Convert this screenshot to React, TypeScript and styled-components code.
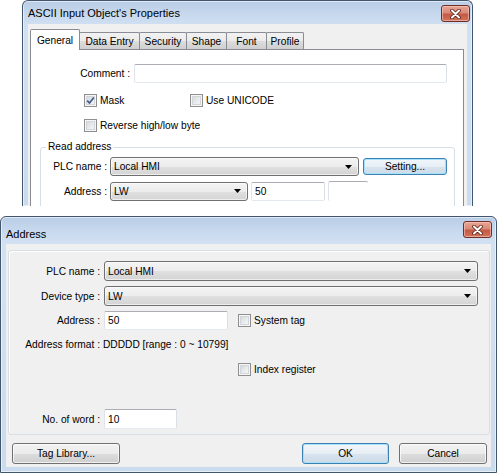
import styled, { createGlobalStyle } from "styled-components";

const GlobalStyle = createGlobalStyle`
	body {
		margin: 0;
		background: #fff;
		font-family: "Liberation Sans", Arial, sans-serif;
		font-size: 10.2px;
		color: #000;
	}
`;

const Page = styled.div`
	width: 497px;
	height: 473px;
	display: flex;
	flex-direction: column;
	gap: 10px;
	overflow: hidden;
`;

const Window = styled.div<{ $width: number; $height: number; $offset?: number; $cropped?: boolean }>`
	box-sizing: border-box;
	flex-shrink: 0;
	width: ${(p) => p.$width}px;
	height: ${(p) => p.$height}px;
	margin-left: ${(p) => p.$offset ?? 0}px;
	display: flex;
	flex-direction: column;
	border: 1px solid #42566e;
	border-bottom-width: ${(p) => (p.$cropped ? 0 : 1)}px;
	border-radius: 6px 6px 0 0;
	background: linear-gradient(180deg, #b9cde7 0px, #c8d9ee 14px, #d2e1f2 26px, #cbdbee 100%);
	box-shadow: inset 0 0 0 1px rgba(255, 255, 255, 0.55);
	padding: 0 5px ${(p) => (p.$cropped ? 0 : 5)}px;
	overflow: hidden;
`;

const TitleBar = styled.div<{ $height: number }>`
	flex-shrink: 0;
	height: ${(p) => p.$height}px;
	margin-right: -3px;
	display: flex;
	align-items: flex-start;
	justify-content: space-between;
`;

const TitleText = styled.span<{ $top: number }>`
	padding-top: ${(p) => p.$top}px;
	font-size: 11px;
	color: #000;
	white-space: nowrap;
`;

const CloseButton = styled.div<{ $top: number; $width: number }>`
	box-sizing: border-box;
	margin-top: ${(p) => p.$top}px;
	width: ${(p) => p.$width}px;
	height: 17px;
	border: 1px solid #6e3026;
	border-radius: 3px;
	background: linear-gradient(180deg, #e8a594 0%, #d98a78 45%, #c45a45 55%, #d0735c 100%);
	box-shadow: inset 0 0 0 1px rgba(255, 210, 200, 0.55);
	display: flex;
	align-items: center;
	justify-content: center;
`;

const Client = styled.div<{ $pad: string }>`
	flex: 1;
	min-height: 0;
	display: flex;
	flex-direction: column;
	background: #f0f0f0;
	padding: ${(p) => p.$pad};
`;

const TabRow = styled.div`
	position: relative;
	z-index: 1;
	display: flex;
	align-items: flex-end;
	height: 21px;
	margin-bottom: -1px;
`;

const Tab = styled.div<{ $width: number; $active?: boolean }>`
	box-sizing: border-box;
	width: ${(p) => p.$width}px;
	height: ${(p) => (p.$active ? 21 : 17)}px;
	margin-bottom: ${(p) => (p.$active ? 0 : 1)}px;
	& + & {
		margin-left: -1px;
	}
	border: 1px solid #898c95;
	border-bottom: none;
	border-radius: 2px 2px 0 0;
	background: ${(p) =>
		p.$active ? "#fff" : "linear-gradient(180deg, #f2f2f2 0%, #ebebeb 50%, #dddddd 51%, #cfcfcf 100%)"};
	display: flex;
	align-items: center;
	justify-content: center;
	white-space: nowrap;
	padding-top: ${(p) => (p.$active ? 0 : 1)}px;
`;

const TabPanel = styled.div`
	flex: 1;
	display: flex;
	flex-direction: column;
	background: #fff;
	border: 1px solid #898c95;
	border-bottom: none;
`;

const Row = styled.div<{ $top: number; $gap?: number; $indent?: number }>`
	display: flex;
	align-items: center;
	margin-top: ${(p) => p.$top}px;
	gap: ${(p) => p.$gap ?? 0}px;
	padding-left: ${(p) => p.$indent ?? 0}px;
`;

const FieldLabel = styled.span<{ $width: number }>`
	width: ${(p) => p.$width}px;
	flex-shrink: 0;
	text-align: right;
	white-space: nowrap;
`;

const TextBox = styled.div<{ $width: number; $height: number; $open?: boolean }>`
	box-sizing: border-box;
	width: ${(p) => p.$width}px;
	height: ${(p) => p.$height}px;
	flex-shrink: 0;
	background: #fff;
	border: 1px solid;
	border-color: #abadb3 #dbdfe6 #e3e9ef #e2e3ea;
	border-right-width: ${(p) => (p.$open ? 0 : 1)}px;
	border-bottom-width: ${(p) => (p.$open ? 0 : 1)}px;
	border-radius: 2px;
	display: flex;
	align-items: center;
	padding-left: 3px;
`;

const Combo = styled.div<{ $width: number; $height: number }>`
	box-sizing: border-box;
	width: ${(p) => p.$width}px;
	height: ${(p) => p.$height}px;
	flex-shrink: 0;
	border: 1px solid #707070;
	border-radius: 3px;
	background: linear-gradient(180deg, #f4f4f4 0%, #ececec 50%, #e0e0e0 51%, #d4d4d4 100%);
	box-shadow: inset 0 0 0 1px rgba(255, 255, 255, 0.6);
	display: flex;
	align-items: center;
	justify-content: space-between;
	padding: 0 6px 0 3px;
`;

const Button = styled.div<{ $width: number; $height: number; $focused?: boolean; $shift?: number }>`
	box-sizing: border-box;
	width: ${(p) => p.$width}px;
	height: ${(p) => p.$height}px;
	margin-left: ${(p) => p.$shift ?? 0}px;
	flex-shrink: 0;
	border: 1px solid ${(p) => (p.$focused ? "#3c7fb1" : "#707070")};
	border-radius: 3px;
	background: ${(p) =>
		p.$focused
			? "linear-gradient(180deg, #f1f6fa 0%, #e6eef5 50%, #d8e4ee 51%, #cddbe8 100%)"
			: "linear-gradient(180deg, #f2f2f2 0%, #ebebeb 50%, #dddddd 51%, #cfcfcf 100%)"};
	box-shadow: inset 0 0 0 1px ${(p) => (p.$focused ? "#a6e2fb" : "rgba(255,255,255,0.7)")};
	display: flex;
	align-items: center;
	justify-content: center;
	white-space: nowrap;
`;

const CheckItem = styled.label<{ $width?: number; $shift?: number }>`
	display: flex;
	align-items: center;
	gap: 3px;
	width: ${(p) => (p.$width ? `${p.$width}px` : "auto")};
	margin-left: ${(p) => p.$shift ?? 0}px;
	white-space: nowrap;
`;

const CheckSquare = styled.span`
	box-sizing: border-box;
	width: 13px;
	height: 13px;
	flex-shrink: 0;
	border: 1px solid #8e8f8f;
	background: linear-gradient(135deg, #cdd1d6 0%, #e9ebed 55%, #fbfbfb 100%);
	box-shadow: inset 0 0 0 1px #f6f6f6, inset 0 0 0 2px #d2d5d9;
	display: flex;
	align-items: center;
	justify-content: center;
`;

const GroupBox = styled.fieldset<{ $indent: number; $width: number }>`
	box-sizing: border-box;
	width: ${(p) => p.$width}px;
	margin: 9px 0 0 ${(p) => p.$indent}px;
	padding: 0 0 10px;
	min-width: 0;
	border: 1px solid #d5dfe5;
	border-radius: 3px;
	box-shadow: inset 1px 1px 0 #fff;
`;

const Legend = styled.legend`
	margin-left: 5px;
	padding: 0 2px;
	line-height: 12px;
	color: #000;
`;

const Frame = styled.div`
	box-sizing: border-box;
	height: 185px;
	flex-shrink: 0;
	border: 1px solid #d5dfe5;
	border-radius: 3px;
	box-shadow: inset 1px 1px 0 #fff;
	display: flex;
	flex-direction: column;
`;

const ButtonBar = styled.div`
	display: flex;
	align-items: center;
	justify-content: space-between;
	margin-top: 8px;
	padding: 0 3px 0 4px;
`;

const ButtonGroup = styled.div`
	display: flex;
	gap: 10px;
`;

function CloseGlyph() {
	return (
		<svg width="11" height="10" viewBox="0 0 11 10">
			<path d="M2 1.5 L9 8.5 M9 1.5 L2 8.5" stroke="#5b1f17" strokeWidth="3.6" strokeLinecap="round" />
			<path d="M2 1.5 L9 8.5 M9 1.5 L2 8.5" stroke="#fff" strokeWidth="2" strokeLinecap="round" />
		</svg>
	);
}

function Arrow() {
	return (
		<svg width="7" height="4" viewBox="0 0 7 4">
			<polygon points="0,0 7,0 3.5,4" fill="#000" />
		</svg>
	);
}

function Check({ label, checked, width, shift }: { label: string; checked?: boolean; width?: number; shift?: number }) {
	return (
		<CheckItem $width={width} $shift={shift}>
			<CheckSquare>
				{checked && (
					<svg width="9" height="9" viewBox="0 0 9 9">
						<path d="M1.2 4.6 L3.5 7 L7.8 1.4" stroke="#3f5a8f" strokeWidth="1.7" fill="none" />
					</svg>
				)}
			</CheckSquare>
			{label}
		</CheckItem>
	);
}

function Dropdown({ value, width, height }: { value: string; width: number; height: number }) {
	return (
		<Combo $width={width} $height={height}>
			<span>{value}</span>
			<Arrow />
		</Combo>
	);
}

const tabs = [
	{ name: "General", width: 50 },
	{ name: "Data Entry", width: 61 },
	{ name: "Security", width: 48 },
	{ name: "Shape", width: 41 },
	{ name: "Font", width: 41 },
	{ name: "Profile", width: 38 },
];

function PropertiesWindow() {
	return (
		<Window $width={451} $height={206} $offset={22} $cropped>
			<TitleBar $height={23}>
				<TitleText $top={6}>ASCII Input Object's Properties</TitleText>
				<CloseButton $top={4} $width={29}>
					<CloseGlyph />
				</CloseButton>
			</TitleBar>
			<Client $pad="5px 3px 0 2px">
				<TabRow>
					{tabs.map((t, i) => (
						<Tab key={t.name} $width={t.width} $active={i === 0}>
							{t.name}
						</Tab>
					))}
				</TabRow>
				<TabPanel>
					<Row $top={14} $gap={4}>
						<FieldLabel $width={99}>Comment :</FieldLabel>
						<TextBox $width={313} $height={19} />
					</Row>
					<Row $top={11} $indent={53}>
						<Check label="Mask" checked width={106} />
						<Check label="Use UNICODE" />
					</Row>
					<Row $top={12} $indent={53}>
						<Check label="Reverse high/low byte" />
					</Row>
					<GroupBox $indent={9} $width={415}>
						<Legend>Read address</Legend>
						<Row $top={4} $gap={3}>
							<FieldLabel $width={66}>PLC name :</FieldLabel>
							<Dropdown value="Local HMI" width={249} height={19} />
							<Button $width={84} $height={17} $focused $shift={1}>
								Setting...
							</Button>
						</Row>
						<Row $top={5} $gap={3}>
							<FieldLabel $width={66}>Address :</FieldLabel>
							<Dropdown value="LW" width={138} height={19} />
							<TextBox $width={74} $height={19}>
								50
							</TextBox>
							<TextBox $width={40} $height={20} $open />
						</Row>
					</GroupBox>
				</TabPanel>
			</Client>
		</Window>
	);
}

function AddressWindow() {
	return (
		<Window $width={497} $height={257}>
			<TitleBar $height={27}>
				<TitleText $top={11}>Address</TitleText>
				<CloseButton $top={4} $width={29} style={{ marginRight: 2 }}>
					<CloseGlyph />
				</CloseButton>
			</TitleBar>
			<Client $pad="6px 1px 0 2px">
				<Frame>
					<Row $top={10} $gap={4}>
						<FieldLabel $width={91}>PLC name :</FieldLabel>
						<Dropdown value="Local HMI" width={374} height={20} />
					</Row>
					<Row $top={5} $gap={4}>
						<FieldLabel $width={91}>Device type :</FieldLabel>
						<Dropdown value="LW" width={374} height={20} />
					</Row>
					<Row $top={5} $gap={4}>
						<FieldLabel $width={91}>Address :</FieldLabel>
						<TextBox $width={124} $height={19}>
							50
						</TextBox>
						<Check label="System tag" shift={6} />
					</Row>
					<Row $top={9} $gap={3}>
						<FieldLabel $width={91}>Address format :</FieldLabel>
						<span>DDDDD [range : 0 ~ 10799]</span>
					</Row>
					<Row $top={13} $indent={229}>
						<Check label="Index register" />
					</Row>
					<Row $top={33} $gap={4}>
						<FieldLabel $width={91}>No. of word :</FieldLabel>
						<TextBox $width={73} $height={20}>
							10
						</TextBox>
					</Row>
				</Frame>
				<ButtonBar>
					<Button $width={108} $height={21}>
						Tag Library...
					</Button>
					<ButtonGroup>
						<Button $width={87} $height={21} $focused>
							OK
						</Button>
						<Button $width={88} $height={21}>
							Cancel
						</Button>
					</ButtonGroup>
				</ButtonBar>
			</Client>
		</Window>
	);
}

export default function App() {
	return (
		<>
			<GlobalStyle />
			<Page>
				<PropertiesWindow />
				<AddressWindow />
			</Page>
		</>
	);
}
